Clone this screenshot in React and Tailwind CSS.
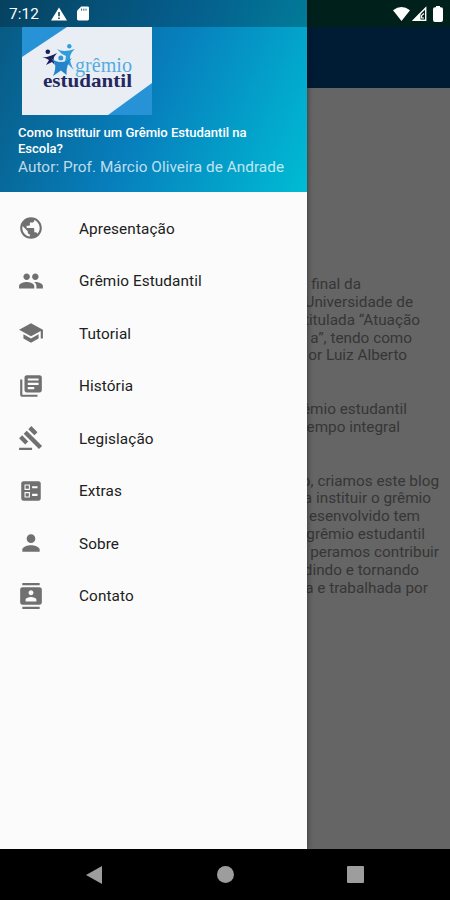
import {
  MdPublic,
  MdPeople,
  MdSchool,
  MdLibraryBooks,
  MdGavel,
  MdBallot,
  MdPerson,
  MdContacts,
} from "react-icons/md";

const menuItems = [
  { label: "Apresentação", icon: MdPublic },
  { label: "Grêmio Estudantil", icon: MdPeople },
  { label: "Tutorial", icon: MdSchool },
  { label: "História", icon: MdLibraryBooks },
  { label: "Legislação", icon: MdGavel },
  { label: "Extras", icon: MdBallot },
  { label: "Sobre", icon: MdPerson },
  { label: "Contato", icon: MdContacts },
];

const paragraphs = [
  [
    { text: "final da", end: "pr-[89px]" },
    { text: "Universidade de", end: "pr-[37px]" },
    { text: "titulada “Atuação", end: "pr-[30px]" },
    { text: "a”, tendo como", end: "pr-[38px]" },
    { text: "or Luiz Alberto", end: "pr-[43px]" },
  ],
  [
    { text: "êmio estudantil", end: "pr-[43px]" },
    { text: "empo integral", end: "pr-[50px]" },
  ],
  [
    { text: "o, criamos este blog", end: "pr-[11px]" },
    { text: "a instituir o grêmio", end: "pr-[19px]" },
    { text: "esenvolvido tem", end: "pr-[30px]" },
    { text: "grêmio estudantil", end: "pr-[25px]" },
    { text: "peramos contribuir", end: "pr-[11px]" },
    { text: "dindo e tornando", end: "pr-[31px]" },
    { text: "a e trabalhada por", end: "pr-[22px]" },
  ],
];

function StatusBar() {
  return (
    <div className="absolute inset-x-0 top-0 z-20 flex h-[27px] items-center bg-black/25 pl-[9px] pr-[7px] text-white">
      <span className="pt-[2px] text-[15.3px] leading-none tracking-[0.1px]">7:12</span>
      <svg className="ml-[12px] h-[14px] w-[16px]" viewBox="0 0 17 14">
        <path d="M8.5 0 17 14H0Z" fill="currentColor" />
        <path d="M8.5 5v4.3M8.5 10.6v1.6" stroke="#0b4562" strokeWidth="1.7" />
      </svg>
      <svg className="ml-[10px] h-[15px] w-[12px]" viewBox="0 0 13 15">
        <path d="M4.5 0H11.5Q13 0 13 1.5V13.5Q13 15 11.5 15H1.5Q0 15 0 13.5V4.5Z" fill="currentColor" />
        <path d="M5 2.2v2.3M7.4 2.2v2.3M9.8 2.2v2.3" stroke="#0b4562" strokeWidth="0.9" />
      </svg>
      <div className="ml-auto flex items-center">
        <svg className="h-[14px] w-[17px]" viewBox="0 0 17 14">
          <path d="M0 3.2Q8.5-3 17 3.2L8.5 14Z" fill="currentColor" />
        </svg>
        <svg className="ml-[2px] h-[15px] w-[15px]" viewBox="0 0 15 15">
          <path d="M13.7 1.9V14.2H1.6Z" fill="none" stroke="currentColor" strokeWidth="1.4" />
          <path d="M1 14.6 8.5 6.5V14.6Z" fill="currentColor" />
          <path d="M12 7.5 9.6 9.6V12H12" fill="none" stroke="currentColor" strokeWidth="1.1" />
        </svg>
        <svg className="ml-[6px] h-[16px] w-[10px]" viewBox="0 0 10 16">
          <path d="M3 0H7V1.2H8Q10 1.2 10 3.2V14Q10 16 8 16H2Q0 16 0 14V3.2Q0 1.2 2 1.2H3Z" fill="currentColor" />
        </svg>
      </div>
    </div>
  );
}

function Logo() {
  return (
    <svg className="ml-[4px] h-[88px] w-[130px]" viewBox="0 0 130 88">
      <rect width="130" height="88" fill="#e9eef4" />
      <path d="M0 0H45L0 30Z" fill="#2792d6" />
      <path d="M130 56V88H86Z" fill="#2792d6" />
      <g fill="#1b1c5c">
        <circle cx="25.8" cy="24.7" r="2.3" />
        <path d="M20 30Q26 31 35 26L32 30Q31 33 33 38L30 35 24 38 27 33Q24 31 20 30Z" />
      </g>
      <g fill="#2f9edb">
        <circle cx="47.3" cy="19.2" r="2.2" />
        <path d="M35 22Q41 26 53 22Q48 26 48 31Q48 37 52 43L47 38 43 35 44 29 40 27Z" />
      </g>
      <path d="M29 31Q38 39 50 31Q44 37 44.500 48L39 43.500 31 49Q34 42 33 37Z" fill="#2384cc" />
      <circle cx="38.8" cy="31" r="3.3" fill="#e9eef4" />
      <circle cx="38.8" cy="31" r="2.5" fill="#3a95d2" />
      <text x="53" y="45" textLength="57" lengthAdjust="spacingAndGlyphs" fontFamily="Liberation Serif, serif" fontSize="20.500" fill="#55ace0">
        grêmio
      </text>
      <text x="21" y="60" textLength="89" lengthAdjust="spacingAndGlyphs" fontFamily="Liberation Serif, serif" fontSize="19.500" fontWeight="700" fill="#25275f">
        estudantil
      </text>
    </svg>
  );
}

function Drawer() {
  return (
    <aside className="z-10 flex w-[307px] shrink-0 flex-col bg-[#fbfbfb] shadow-[1px_0_5px_rgba(0,0,0,0.4)]">
      <header className="h-[192px] bg-[linear-gradient(115deg,#085880_0%,#077fbd_50%,#00bcd4_100%)] pl-[18px] pt-[27px] text-white">
        <Logo />
        <h1 className="mt-[10px] w-[240px] text-[13.1px] font-medium leading-[15.5px] tracking-[-0.05px]">
          Como Instituir um Grêmio Estudantil na Escola?
        </h1>
        <p className="mt-[2px] whitespace-nowrap text-[15.3px] leading-[19px] tracking-[0.06px] text-white/75">
          Autor: Prof. Márcio Oliveira de Andrade
        </p>
      </header>
      <nav className="flex flex-col pt-[10px]">
        {menuItems.map(({ label, icon: Icon }) => (
          <a key={label} className="flex h-[52.5px] items-center pl-[18px]">
            <Icon className="size-[26px] text-[#707070]" />
            <span className="ml-[35px] pt-[2px] text-[15.3px] tracking-[0.1px] text-[#202020]">{label}</span>
          </a>
        ))}
      </nav>
    </aside>
  );
}

function Page() {
  return (
    <main className="flex min-w-0 flex-1 flex-col overflow-hidden bg-[#656565]">
      <div className="h-[27px] shrink-0 bg-[#002d25]" />
      <div className="h-[61px] shrink-0 bg-[#001b34]" />
      <div className="flex flex-col gap-[35.8px] pt-[188px] text-[15.3px] leading-[17.85px] text-[#363636]">
        {paragraphs.map((lines, i) => (
          <div key={i}>
            {lines.map(({ text, end }) => (
              <div key={text} className={`flex justify-end whitespace-nowrap ${end}`}>
                {text}
              </div>
            ))}
          </div>
        ))}
      </div>
    </main>
  );
}

function NavigationBar() {
  return (
    <div className="flex h-[51px] items-center justify-between bg-black px-[86px] text-[#9d9d9d]">
      <svg className="h-[18px] w-[17px]" viewBox="0 0 17 18">
        <path d="M0 9 16 0V18Z" fill="currentColor" />
      </svg>
      <div className="size-[17px] rounded-full bg-[#9d9d9d]" />
      <div className="size-[17px] rounded-[1px] bg-[#9d9d9d]" />
    </div>
  );
}

export default function App() {
  return (
    <div className="relative flex h-[900px] w-[450px] flex-col overflow-hidden font-[Roboto,sans-serif]">
      <StatusBar />
      <div className="flex h-[849px] overflow-hidden">
        <Drawer />
        <Page />
      </div>
      <NavigationBar />
    </div>
  );
}
